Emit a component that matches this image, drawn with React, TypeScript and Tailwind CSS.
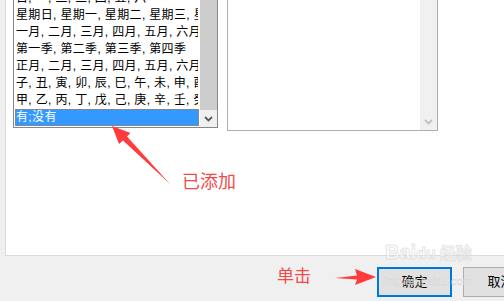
import React from "react";

const leftItems = [
  "Sun, Mon, Tue, Wed, Thu, Fri, Sat",
  "Jan, Feb, Mar, Apr, May, Jun, Jul",
  "日, 一, 二, 三, 四, 五, 六",
  "星期日, 星期一, 星期二, 星期三, 星期四",
  "一月, 二月, 三月, 四月, 五月, 六月, 七月",
  "第一季, 第二季, 第三季, 第四季",
  "正月, 二月, 三月, 四月, 五月, 六月, 七月",
  "子, 丑, 寅, 卯, 辰, 巳, 午, 未, 申, 酉, 戌",
  "甲, 乙, 丙, 丁, 戊, 己, 庚, 辛, 壬, 癸",
];

function Chevron({ color }: { color: string }) {
  return (
    <svg width="9" height="6" viewBox="0 0 9 6">
      <path d="M1 1 L4.5 4.5 L8 1" fill="none" stroke={color} strokeWidth="1.8" />
    </svg>
  );
}

export default function App() {
  return (
    <div
      className="relative w-[504px] h-[301px] overflow-hidden bg-[#f0f0f0]"
      style={{ fontFamily: '"Liberation Sans", "Noto Sans CJK SC", sans-serif' }}
    >
      {/* white panel */}
      <div className="ml-[5px] mt-[-20px] h-[276px] border border-r-0 border-[#dadada] bg-white pl-[7px] flex items-start gap-[9px]">
        {/* left list */}
        <div className="w-[205px] h-[147px] border border-[#828790] flex shrink-0">
          <div className="flex-1 flex flex-col justify-end overflow-hidden px-[1px] pb-[1px]">
            {leftItems.map((t) => (
              <div
                key={t}
                className="h-[17px] shrink-0 border border-transparent text-[12px] leading-[15px] tracking-[0.35px] text-black whitespace-nowrap overflow-hidden"
              >
                {t}
              </div>
            ))}
            <div className="h-[17px] shrink-0 border border-dotted border-[#c9742c] bg-[#3399ff] text-[12px] leading-[15px] tracking-[0.35px] text-white whitespace-nowrap">
              有;没有
            </div>
          </div>
          <div className="w-[17px] flex flex-col">
            <div className="flex-1 bg-[#cdcdcd]" />
            <div className="h-[17px] bg-[#f0f0f0] flex items-center justify-center">
              <Chevron color="#5a5a5a" />
            </div>
          </div>
        </div>
        {/* right list */}
        <div className="w-[211px] h-[150px] border border-[#abadb3] flex shrink-0">
          <div className="flex-1 bg-white" />
          <div className="w-[17px] bg-[#f0f0f0] flex flex-col justify-end">
            <div className="h-[17px] flex items-center justify-center">
              <Chevron color="#c2c2c2" />
            </div>
          </div>
        </div>
      </div>

      {/* bottom buttons */}
      <div className="flex items-start pl-[377px] pt-[11px] gap-[11px]">
        <button className="w-[75px] h-[30px] shrink-0 border-2 border-[#0078d7] bg-[#e1e1e1] text-[13px] text-black flex items-center justify-center">
          确定
        </button>
        <button className="w-[75px] h-[30px] shrink-0 border border-[#adadad] bg-[#e1e1e1] text-[13px] text-black flex items-center justify-center">
          取消
        </button>
      </div>

      {/* annotations */}
      <svg className="absolute left-0 top-0 pointer-events-none" width="504" height="301">
        <polygon
          points="112,126 119,144 123,140.5 170,184 127,136.5 130.5,133"
          fill="#ff3b3b"
        />
        <polygon
          points="335,278 357,275.5 355,269 376,277 355,285 357,279.5"
          fill="#ff3b3b"
        />
      </svg>
      <div
        className="absolute left-[182px] top-[169px] text-[18px] leading-[22px] text-[#f24a4a]"
        style={{ fontFamily: '"Noto Sans CJK SC", sans-serif' }}
      >
        已添加
      </div>
      <div
        className="absolute left-[277px] top-[264px] text-[17px] leading-[22px] text-[#f24a4a]"
        style={{ fontFamily: '"Noto Sans CJK SC", sans-serif' }}
      >
        单击
      </div>

      {/* watermark */}
      <div
        className="absolute left-[385px] top-[241px] text-[20px] leading-[22px] font-bold text-white opacity-70 pointer-events-none"
        style={{ fontFamily: '"Liberation Sans", sans-serif', WebkitTextStroke: "1px #dcdcdc" }}
      >
        Bai<span className="text-[16px]">du</span>
        <span className="ml-[4px] text-[16px]" style={{ fontFamily: '"Noto Sans CJK SC", sans-serif' }}>经验</span>
      </div>
      <div
        className="absolute left-[383px] top-[274px] text-[11px] leading-[14px] text-white opacity-70 pointer-events-none"
        style={{ fontFamily: '"Liberation Sans", sans-serif', WebkitTextStroke: "0.5px #d0d0d0" }}
      >
        jingyan.baidu.com
      </div>
    </div>
  );
}
